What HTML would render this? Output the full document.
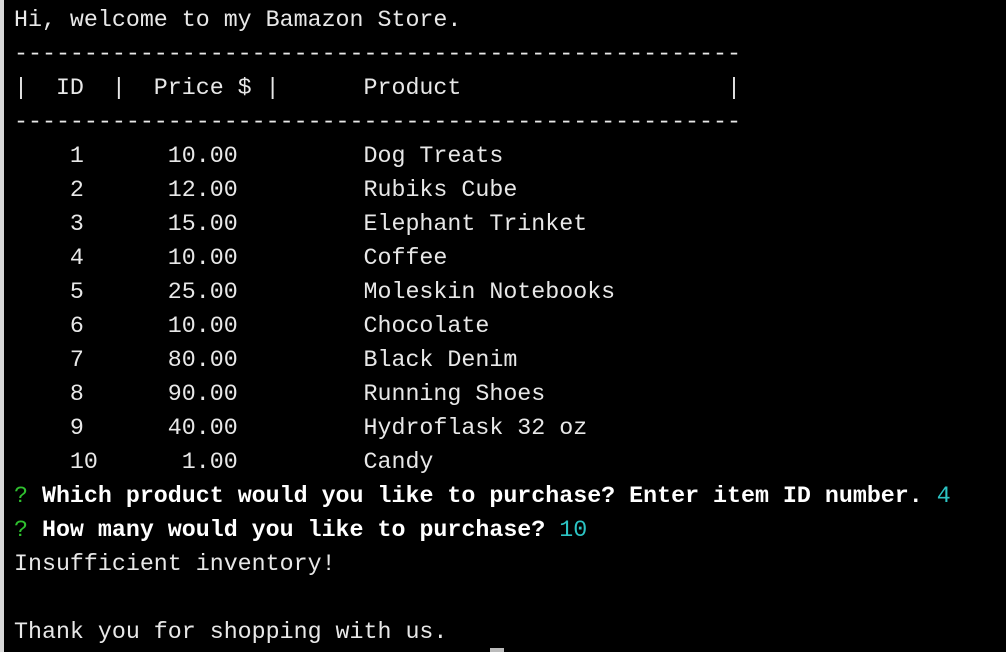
<!DOCTYPE html>
<html><head><meta charset="utf-8"><style>
html,body{margin:0;padding:0;}
body{width:1006px;height:652px;background:#000;position:relative;overflow:hidden;}
.strip{position:absolute;left:0;top:0;width:4px;height:652px;background:#d9d9d9;}
pre{position:absolute;left:14px;top:3px;margin:0;font-family:"Liberation Mono",monospace;font-size:23.3px;line-height:34px;color:#e8e8e8;letter-spacing:0;}
.g{color:#2fc12f;}
.b{color:#fff;font-weight:bold;}
.c{color:#2cc4c4;}
.cur{position:absolute;left:490px;top:648px;width:14px;height:4px;background:#bbb;}
</style></head><body>
<div class="strip"></div>
<pre>Hi, welcome to my Bamazon Store.
----------------------------------------------------
|  ID  |  Price $ |      Product                   |
----------------------------------------------------
    1      10.00         Dog Treats
    2      12.00         Rubiks Cube
    3      15.00         Elephant Trinket
    4      10.00         Coffee
    5      25.00         Moleskin Notebooks
    6      10.00         Chocolate
    7      80.00         Black Denim
    8      90.00         Running Shoes
    9      40.00         Hydroflask 32 oz
    10      1.00         Candy
<span class="g">?</span> <span class="b">Which product would you like to purchase? Enter item ID number.</span> <span class="c">4</span>
<span class="g">?</span> <span class="b">How many would you like to purchase?</span> <span class="c">10</span>
Insufficient inventory!

Thank you for shopping with us.</pre>
<div class="cur"></div>
</body></html>
